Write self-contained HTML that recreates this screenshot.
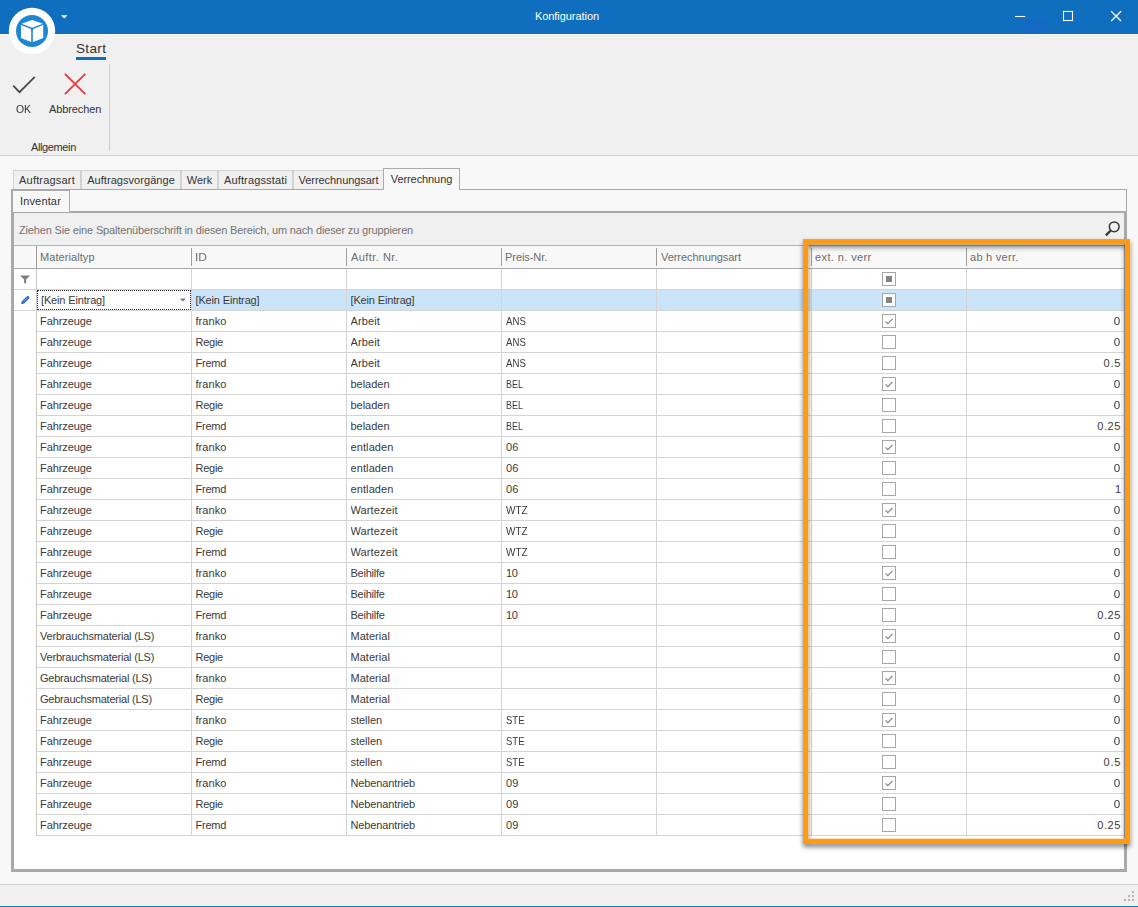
<!DOCTYPE html>
<html lang="de"><head><meta charset="utf-8"><title>Konfiguration</title>
<style>
*{box-sizing:border-box;margin:0;padding:0}
html,body{width:1138px;height:907px;overflow:hidden}
body{position:relative;background:#f8f8f8;font-family:"Liberation Sans",sans-serif;font-size:11px;color:#3a3a3a;-webkit-font-smoothing:antialiased}
.abs{position:absolute}
#title{position:absolute;left:0;top:0;width:1138px;height:34px;background:#106ebe}
#title .cap{position:absolute;left:-2px;width:1138px;top:0;line-height:33px;text-align:center;color:#fff;font-size:11px}
#ribbon{position:absolute;left:0;top:34px;width:1138px;height:122px;background:#f0f0f0;border-bottom:1px solid #d2d2d2;border-top:1px solid #fbf7f2}
#logo{position:absolute;left:0;top:0}
#start{position:absolute;left:76px;top:39px;width:30px;height:21px;padding-top:1px;border-bottom:3px solid #106ebe;font-size:13.6px;line-height:18px;letter-spacing:.3px;color:#333;white-space:nowrap}
.rsep{position:absolute;left:109px;top:64px;width:1px;height:87px;background:#cdcdcd}
.rlbl{position:absolute;white-space:nowrap;line-height:13px;color:#333}
#tabs{position:absolute;left:13px;top:170px;height:19px;display:flex}
.tab{height:19px;border:1px solid #d2d2d2;border-bottom:none;background:#f0f0f0;line-height:18px;white-space:nowrap;text-align:center;color:#333}

.tab.sel{height:22px;margin-top:-2px;margin-left:-1px;background:#f8f8f8;border:1px solid #acacac;border-bottom:none;line-height:21px;position:relative;z-index:3}
#page{position:absolute;left:11px;top:189px;width:1116px;height:683px;border:1px solid #a9a9a9}
#ipage{position:absolute;left:12px;top:211px;width:1114px;height:660px;border:1px solid #a9a9a9}
#inv{position:absolute;left:12px;top:190px;width:58px;height:22px;border:1px solid #a9a9a9;border-bottom:none;background:#f8f8f8;line-height:20px;padding-left:7px;z-index:2;color:#333;white-space:nowrap}
#grid{position:absolute;left:13px;top:212px;width:1112px;height:658px;border:1px solid #a9a9a9;background:#fff}
#gp{position:absolute;left:14px;top:213px;width:1110px;height:32px;background:#f0f0f0;line-height:34px;padding-left:5px;color:#737373;white-space:nowrap}
#hdr{position:absolute;left:14px;top:245px;width:1110px;height:24px;background:#f8f8f8;border-top:1px solid #b2b2b2;border-bottom:1px solid #a9a9a9}
.h{position:absolute;top:0;height:22px;line-height:22px;color:#6c6c6c;white-space:nowrap}
.hs{position:absolute;top:2px;width:1px;height:18px;background:#9d9d9d}
.vl{position:absolute;top:269px;width:1px;height:567px;background:#d4d4d4}
.hl{position:absolute;left:14px;width:1110px;height:1px;background:#d4d4d4}
.row{position:absolute;left:37px;width:1087px;height:21px;border-bottom:1px solid #d4d4d4;line-height:20px;white-space:nowrap}
.c{position:absolute;top:0;height:20px;overflow:hidden}
.c1{left:3px;width:150px}
.c2{left:158.5px;width:150px}
.c3{left:313.5px;width:150px}
.c4{left:469px;width:150px}
.c5{left:624px;width:150px}
.c6{left:775px;width:154px}
.c7{left:929.5px;width:154px;text-align:right;padding-right:0}
.cb{position:absolute;left:70px;top:3px;width:14px;height:14px;border:1px solid #a6a6a6;background:#fff}
.cb .ck{position:absolute;left:-1px;top:-1px}
.cb .ind{position:absolute;left:3px;top:3px;width:6px;height:6px;background:#858585}
#sel{position:absolute;left:192px;top:290px;width:932px;height:20px;background:#cce4f7}
#status{position:absolute;left:0;top:884px;width:1138px;height:23px;background:#f0f0f0;border-top:1px solid #d0d0d0;border-bottom:1px solid #106ebe;box-shadow:inset 0 -1px 0 #fbf7f1}
</style></head>
<body>
<div id="title"><div class="cap"><span style="letter-spacing:-0.05px">Konfiguration</span></div>
<svg class="abs" style="left:1000px;top:0" width="138" height="34" viewBox="0 0 138 34">
<rect x="22" y="20" width="26" height="14" fill="#1469c3"/>
<path d="M15 16.5H25.2" stroke="#fff" stroke-width="1.1" fill="none"/>
<rect x="63.5" y="11.5" width="9" height="9" stroke="#fff" stroke-width="1.1" fill="none"/>
<path d="M111.2 11.2L121 21M121 11.2L111.2 21" stroke="#fff" stroke-width="1.25" fill="none"/>
</svg>
</div>
<div id="ribbon"></div>
<svg id="logo" width="80" height="60" viewBox="0 0 80 60">
<circle cx="32" cy="31" r="23.2" fill="#fff"/>
<circle cx="32" cy="31" r="16" fill="#1e87d4"/>
<path d="M32.1 20L42.9 23.7L32.1 27.8L21.5 23.7Z" fill="#fff"/>
<path d="M21 25.1L31 29.1V42L21 38Z" fill="#fff"/>
<path d="M43.2 25.1L33.1 29.1V42L43.2 38Z" fill="#fff"/>
<path d="M31 30.5H33.1V41.6H31Z" fill="#fff" opacity=".22"/>
<path d="M61 15.2H67.4L64.2 18.6Z" fill="#fff"/>
</svg>
<div id="start">Start</div>
<svg class="abs" style="left:8px;top:70px" width="90" height="30" viewBox="8 70 90 30">
<path d="M13.2 85.7L19.5 92.2L34.8 76.8" fill="none" stroke="#474747" stroke-width="1.75"/>
<path d="M64.9 73.9L85.3 94.2M85.3 73.9L64.9 94.2" fill="none" stroke="#ea3b40" stroke-width="1.85"/>
</svg>
<div class="rlbl" style="left:16px;top:103px"><span style="display:inline-block;transform:scaleX(0.945);transform-origin:left center">OK</span></div>
<div class="rlbl" style="left:49px;top:103px"><span style="letter-spacing:-0.117px">Abbrechen</span></div>
<div class="rlbl" style="left:31px;top:141px"><span style="letter-spacing:-0.38px">Allgemein</span></div>
<div class="rsep"></div>

<div id="page"></div>
<div id="tabs">
<div class="tab first" style="width:68px"><span style="letter-spacing:0.19px">Auftragsart</span></div>
<div class="tab" style="width:100px"><span style="letter-spacing:0.05px">Auftragsvorgänge</span></div>
<div class="tab" style="width:37px"><span style="letter-spacing:-0.03px">Werk</span></div>
<div class="tab" style="width:75px"><span style="letter-spacing:0.15px">Auftragsstati</span></div>
<div class="tab" style="width:91px"><span style="letter-spacing:-0.05px">Verrechnungsart</span></div>
<div class="tab sel" style="width:77px"><span style="letter-spacing:-0.08px">Verrechnung</span></div>
</div>
<div id="ipage"></div>
<div id="inv"><span style="letter-spacing:0.15px">Inventar</span></div>
<div id="grid"></div>
<div id="gp"><span style="letter-spacing:-0.161px">Ziehen Sie eine Spaltenüberschrift in diesen Bereich, um nach dieser zu gruppieren</span></div>
<svg class="abs" style="left:1100px;top:218px" width="24" height="22" viewBox="1100 218 24 22">
<circle cx="1114.2" cy="226.8" r="4.9" fill="none" stroke="#3a3a3a" stroke-width="1.5"/>
<path d="M1110.7 230.5L1105.9 235.3" stroke="#3a3a3a" stroke-width="2.4" fill="none"/>
</svg>
<div id="hdr">
<span class="h" style="left:26px"><span style="letter-spacing:0.07px">Materialtyp</span></span>
<span class="h" style="left:181px"><span style="display:inline-block;transform:scaleX(1.09);transform-origin:left center">ID</span></span>
<span class="h" style="left:337px"><span style="letter-spacing:0.45px">Auftr. Nr.</span></span>
<span class="h" style="left:491px"><span style="letter-spacing:-0.06px">Preis-Nr.</span></span>
<span class="h" style="left:647px"><span style="letter-spacing:-0.05px">Verrechnungsart</span></span>
<span class="h" style="left:801px"><span style="letter-spacing:0.39px">ext. n. verr</span></span>
<span class="h" style="left:956px"><span style="letter-spacing:0.27px">ab h verr.</span></span>
<i class="hs" style="left:22px;top:0;height:22px"></i>
<i class="hs" style="left:177px"></i>
<i class="hs" style="left:332px"></i>
<i class="hs" style="left:487px"></i>
<i class="hs" style="left:642px"></i>
<i class="hs" style="left:797px"></i>
<i class="hs" style="left:952px"></i>
</div>
<div id="sel"></div>
<i class="hl" style="top:289px"></i>
<i class="hl" style="top:310px"></i>
<i class="vl" style="left:36px;background:#c8c8c8"></i>
<i class="vl" style="left:191px"></i>
<i class="vl" style="left:346px"></i>
<i class="vl" style="left:501px"></i>
<i class="vl" style="left:656px"></i>
<i class="vl" style="left:811px"></i>
<i class="vl" style="left:966px"></i>
<svg class="abs" style="left:18px;top:272px" width="16" height="36" viewBox="18 272 16 36">
<path d="M20 275.4H30.2L26.1 279.6V283.2H24.1V279.6Z" fill="#7f7f7f"/>
<g transform="translate(25.3 300.1) rotate(-45)"><path d="M-5.9 0L-3.3 -1.55H3.6A1.55 1.55 0 0 1 3.6 1.55H-3.3Z" fill="#2568c8"/><path d="M-2.6 -0.1H3.2" stroke="#9cc0f0" stroke-width=".7" fill="none"/></g>
</svg>
<div class="row" style="top:269px"><span class="c c6"><span class="cb"><i class="ind"></i></span></span></div>
<div class="row" style="top:290px"><span class="c c1" style="left:4px"><span style="letter-spacing:-0.146px">[Kein Eintrag]</span></span><span class="c c2"><span style="letter-spacing:-0.146px">[Kein Eintrag]</span></span><span class="c c3"><span style="letter-spacing:-0.146px">[Kein Eintrag]</span></span><span class="c c6"><span class="cb"><i class="ind"></i></span></span></div>
<div class="abs" style="left:37px;top:290px;width:154px;height:20px;border:1px dotted #2a2a2a;background:transparent"></div>
<svg class="abs" style="left:178px;top:296px" width="10" height="8" viewBox="0 0 10 8"><path d="M1.8 2.6H7.8L4.8 5.8Z" fill="#7f7f7f"/></svg>
<div class="rows">
<div class="row" style="top:311px"><span class="c c1"><span style="letter-spacing:-0.09px">Fahrzeuge</span></span><span class="c c2"><span style="letter-spacing:0.05px">franko</span></span><span class="c c3"><span style="letter-spacing:0.127px">Arbeit</span></span><span class="c c4"><span style="display:inline-block;transform:scaleX(0.876);transform-origin:left center">ANS</span></span><span class="c c5"></span><span class="c c6"><span class="cb"><svg class="ck" width="13" height="13" viewBox="0 0 13 13"><path d="M3.6 7.4 L5.85 9.6 L10.5 4.8" fill="none" stroke="#848484" stroke-width="1.2"/></svg></span></span><span class="c c7"><span style="display:inline-block;transform:scaleX(1.06);transform-origin:right center">0</span></span></div>
<div class="row" style="top:332px"><span class="c c1"><span style="letter-spacing:-0.09px">Fahrzeuge</span></span><span class="c c2"><span style="letter-spacing:-0.26px">Regie</span></span><span class="c c3"><span style="letter-spacing:0.127px">Arbeit</span></span><span class="c c4"><span style="display:inline-block;transform:scaleX(0.876);transform-origin:left center">ANS</span></span><span class="c c5"></span><span class="c c6"><span class="cb"></span></span><span class="c c7"><span style="display:inline-block;transform:scaleX(1.06);transform-origin:right center">0</span></span></div>
<div class="row" style="top:353px"><span class="c c1"><span style="letter-spacing:-0.09px">Fahrzeuge</span></span><span class="c c2"><span style="letter-spacing:-0.21px">Fremd</span></span><span class="c c3"><span style="letter-spacing:0.127px">Arbeit</span></span><span class="c c4"><span style="display:inline-block;transform:scaleX(0.876);transform-origin:left center">ANS</span></span><span class="c c5"></span><span class="c c6"><span class="cb"></span></span><span class="c c7"><span style="letter-spacing:0.85px;margin-right:-0.85px">0.5</span></span></div>
<div class="row" style="top:374px"><span class="c c1"><span style="letter-spacing:-0.09px">Fahrzeuge</span></span><span class="c c2"><span style="letter-spacing:0.05px">franko</span></span><span class="c c3"><span style="letter-spacing:-0.02px">beladen</span></span><span class="c c4"><span style="display:inline-block;transform:scaleX(0.817);transform-origin:left center">BEL</span></span><span class="c c5"></span><span class="c c6"><span class="cb"><svg class="ck" width="13" height="13" viewBox="0 0 13 13"><path d="M3.6 7.4 L5.85 9.6 L10.5 4.8" fill="none" stroke="#848484" stroke-width="1.2"/></svg></span></span><span class="c c7"><span style="display:inline-block;transform:scaleX(1.06);transform-origin:right center">0</span></span></div>
<div class="row" style="top:395px"><span class="c c1"><span style="letter-spacing:-0.09px">Fahrzeuge</span></span><span class="c c2"><span style="letter-spacing:-0.26px">Regie</span></span><span class="c c3"><span style="letter-spacing:-0.02px">beladen</span></span><span class="c c4"><span style="display:inline-block;transform:scaleX(0.817);transform-origin:left center">BEL</span></span><span class="c c5"></span><span class="c c6"><span class="cb"></span></span><span class="c c7"><span style="display:inline-block;transform:scaleX(1.06);transform-origin:right center">0</span></span></div>
<div class="row" style="top:416px"><span class="c c1"><span style="letter-spacing:-0.09px">Fahrzeuge</span></span><span class="c c2"><span style="letter-spacing:-0.21px">Fremd</span></span><span class="c c3"><span style="letter-spacing:-0.02px">beladen</span></span><span class="c c4"><span style="display:inline-block;transform:scaleX(0.817);transform-origin:left center">BEL</span></span><span class="c c5"></span><span class="c c6"><span class="cb"></span></span><span class="c c7"><span style="letter-spacing:0.63px;margin-right:-0.63px">0.25</span></span></div>
<div class="row" style="top:437px"><span class="c c1"><span style="letter-spacing:-0.09px">Fahrzeuge</span></span><span class="c c2"><span style="letter-spacing:0.05px">franko</span></span><span class="c c3"><span style="letter-spacing:0.1px">entladen</span></span><span class="c c4"><span style="letter-spacing:0.22px">06</span></span><span class="c c5"></span><span class="c c6"><span class="cb"><svg class="ck" width="13" height="13" viewBox="0 0 13 13"><path d="M3.6 7.4 L5.85 9.6 L10.5 4.8" fill="none" stroke="#848484" stroke-width="1.2"/></svg></span></span><span class="c c7"><span style="display:inline-block;transform:scaleX(1.06);transform-origin:right center">0</span></span></div>
<div class="row" style="top:458px"><span class="c c1"><span style="letter-spacing:-0.09px">Fahrzeuge</span></span><span class="c c2"><span style="letter-spacing:-0.26px">Regie</span></span><span class="c c3"><span style="letter-spacing:0.1px">entladen</span></span><span class="c c4"><span style="letter-spacing:0.22px">06</span></span><span class="c c5"></span><span class="c c6"><span class="cb"></span></span><span class="c c7"><span style="display:inline-block;transform:scaleX(1.06);transform-origin:right center">0</span></span></div>
<div class="row" style="top:479px"><span class="c c1"><span style="letter-spacing:-0.09px">Fahrzeuge</span></span><span class="c c2"><span style="letter-spacing:-0.21px">Fremd</span></span><span class="c c3"><span style="letter-spacing:0.1px">entladen</span></span><span class="c c4"><span style="letter-spacing:0.22px">06</span></span><span class="c c5"></span><span class="c c6"><span class="cb"></span></span><span class="c c7"><span style="margin-right:-0.6px">1</span></span></div>
<div class="row" style="top:500px"><span class="c c1"><span style="letter-spacing:-0.09px">Fahrzeuge</span></span><span class="c c2"><span style="letter-spacing:0.05px">franko</span></span><span class="c c3"><span style="letter-spacing:0.12px">Wartezeit</span></span><span class="c c4"><span style="display:inline-block;transform:scaleX(0.904);transform-origin:left center">WTZ</span></span><span class="c c5"></span><span class="c c6"><span class="cb"><svg class="ck" width="13" height="13" viewBox="0 0 13 13"><path d="M3.6 7.4 L5.85 9.6 L10.5 4.8" fill="none" stroke="#848484" stroke-width="1.2"/></svg></span></span><span class="c c7"><span style="display:inline-block;transform:scaleX(1.06);transform-origin:right center">0</span></span></div>
<div class="row" style="top:521px"><span class="c c1"><span style="letter-spacing:-0.09px">Fahrzeuge</span></span><span class="c c2"><span style="letter-spacing:-0.26px">Regie</span></span><span class="c c3"><span style="letter-spacing:0.12px">Wartezeit</span></span><span class="c c4"><span style="display:inline-block;transform:scaleX(0.904);transform-origin:left center">WTZ</span></span><span class="c c5"></span><span class="c c6"><span class="cb"></span></span><span class="c c7"><span style="display:inline-block;transform:scaleX(1.06);transform-origin:right center">0</span></span></div>
<div class="row" style="top:542px"><span class="c c1"><span style="letter-spacing:-0.09px">Fahrzeuge</span></span><span class="c c2"><span style="letter-spacing:-0.21px">Fremd</span></span><span class="c c3"><span style="letter-spacing:0.12px">Wartezeit</span></span><span class="c c4"><span style="display:inline-block;transform:scaleX(0.904);transform-origin:left center">WTZ</span></span><span class="c c5"></span><span class="c c6"><span class="cb"></span></span><span class="c c7"><span style="display:inline-block;transform:scaleX(1.06);transform-origin:right center">0</span></span></div>
<div class="row" style="top:563px"><span class="c c1"><span style="letter-spacing:-0.09px">Fahrzeuge</span></span><span class="c c2"><span style="letter-spacing:0.05px">franko</span></span><span class="c c3"><span style="letter-spacing:-0.25px">Beihilfe</span></span><span class="c c4"><span style="letter-spacing:-0.26px">10</span></span><span class="c c5"></span><span class="c c6"><span class="cb"><svg class="ck" width="13" height="13" viewBox="0 0 13 13"><path d="M3.6 7.4 L5.85 9.6 L10.5 4.8" fill="none" stroke="#848484" stroke-width="1.2"/></svg></span></span><span class="c c7"><span style="display:inline-block;transform:scaleX(1.06);transform-origin:right center">0</span></span></div>
<div class="row" style="top:584px"><span class="c c1"><span style="letter-spacing:-0.09px">Fahrzeuge</span></span><span class="c c2"><span style="letter-spacing:-0.26px">Regie</span></span><span class="c c3"><span style="letter-spacing:-0.25px">Beihilfe</span></span><span class="c c4"><span style="letter-spacing:-0.26px">10</span></span><span class="c c5"></span><span class="c c6"><span class="cb"></span></span><span class="c c7"><span style="display:inline-block;transform:scaleX(1.06);transform-origin:right center">0</span></span></div>
<div class="row" style="top:605px"><span class="c c1"><span style="letter-spacing:-0.09px">Fahrzeuge</span></span><span class="c c2"><span style="letter-spacing:-0.21px">Fremd</span></span><span class="c c3"><span style="letter-spacing:-0.25px">Beihilfe</span></span><span class="c c4"><span style="letter-spacing:-0.26px">10</span></span><span class="c c5"></span><span class="c c6"><span class="cb"></span></span><span class="c c7"><span style="letter-spacing:0.63px;margin-right:-0.63px">0.25</span></span></div>
<div class="row" style="top:626px"><span class="c c1"><span style="letter-spacing:-0.19px">Verbrauchsmaterial (LS)</span></span><span class="c c2"><span style="letter-spacing:0.05px">franko</span></span><span class="c c3"><span style="letter-spacing:0.03px">Material</span></span><span class="c c4"></span><span class="c c5"></span><span class="c c6"><span class="cb"><svg class="ck" width="13" height="13" viewBox="0 0 13 13"><path d="M3.6 7.4 L5.85 9.6 L10.5 4.8" fill="none" stroke="#848484" stroke-width="1.2"/></svg></span></span><span class="c c7"><span style="display:inline-block;transform:scaleX(1.06);transform-origin:right center">0</span></span></div>
<div class="row" style="top:647px"><span class="c c1"><span style="letter-spacing:-0.19px">Verbrauchsmaterial (LS)</span></span><span class="c c2"><span style="letter-spacing:-0.26px">Regie</span></span><span class="c c3"><span style="letter-spacing:0.03px">Material</span></span><span class="c c4"></span><span class="c c5"></span><span class="c c6"><span class="cb"></span></span><span class="c c7"><span style="display:inline-block;transform:scaleX(1.06);transform-origin:right center">0</span></span></div>
<div class="row" style="top:668px"><span class="c c1"><span style="letter-spacing:-0.225px">Gebrauchsmaterial (LS)</span></span><span class="c c2"><span style="letter-spacing:0.05px">franko</span></span><span class="c c3"><span style="letter-spacing:0.03px">Material</span></span><span class="c c4"></span><span class="c c5"></span><span class="c c6"><span class="cb"><svg class="ck" width="13" height="13" viewBox="0 0 13 13"><path d="M3.6 7.4 L5.85 9.6 L10.5 4.8" fill="none" stroke="#848484" stroke-width="1.2"/></svg></span></span><span class="c c7"><span style="display:inline-block;transform:scaleX(1.06);transform-origin:right center">0</span></span></div>
<div class="row" style="top:689px"><span class="c c1"><span style="letter-spacing:-0.225px">Gebrauchsmaterial (LS)</span></span><span class="c c2"><span style="letter-spacing:-0.26px">Regie</span></span><span class="c c3"><span style="letter-spacing:0.03px">Material</span></span><span class="c c4"></span><span class="c c5"></span><span class="c c6"><span class="cb"></span></span><span class="c c7"><span style="display:inline-block;transform:scaleX(1.06);transform-origin:right center">0</span></span></div>
<div class="row" style="top:710px"><span class="c c1"><span style="letter-spacing:-0.09px">Fahrzeuge</span></span><span class="c c2"><span style="letter-spacing:0.05px">franko</span></span><span class="c c3"><span style="letter-spacing:-0.02px">stellen</span></span><span class="c c4"><span style="display:inline-block;transform:scaleX(0.864);transform-origin:left center">STE</span></span><span class="c c5"></span><span class="c c6"><span class="cb"><svg class="ck" width="13" height="13" viewBox="0 0 13 13"><path d="M3.6 7.4 L5.85 9.6 L10.5 4.8" fill="none" stroke="#848484" stroke-width="1.2"/></svg></span></span><span class="c c7"><span style="display:inline-block;transform:scaleX(1.06);transform-origin:right center">0</span></span></div>
<div class="row" style="top:731px"><span class="c c1"><span style="letter-spacing:-0.09px">Fahrzeuge</span></span><span class="c c2"><span style="letter-spacing:-0.26px">Regie</span></span><span class="c c3"><span style="letter-spacing:-0.02px">stellen</span></span><span class="c c4"><span style="display:inline-block;transform:scaleX(0.864);transform-origin:left center">STE</span></span><span class="c c5"></span><span class="c c6"><span class="cb"></span></span><span class="c c7"><span style="display:inline-block;transform:scaleX(1.06);transform-origin:right center">0</span></span></div>
<div class="row" style="top:752px"><span class="c c1"><span style="letter-spacing:-0.09px">Fahrzeuge</span></span><span class="c c2"><span style="letter-spacing:-0.21px">Fremd</span></span><span class="c c3"><span style="letter-spacing:-0.02px">stellen</span></span><span class="c c4"><span style="display:inline-block;transform:scaleX(0.864);transform-origin:left center">STE</span></span><span class="c c5"></span><span class="c c6"><span class="cb"></span></span><span class="c c7"><span style="letter-spacing:0.85px;margin-right:-0.85px">0.5</span></span></div>
<div class="row" style="top:773px"><span class="c c1"><span style="letter-spacing:-0.09px">Fahrzeuge</span></span><span class="c c2"><span style="letter-spacing:0.05px">franko</span></span><span class="c c3"><span style="letter-spacing:-0.13px">Nebenantrieb</span></span><span class="c c4"><span style="letter-spacing:0.21px">09</span></span><span class="c c5"></span><span class="c c6"><span class="cb"><svg class="ck" width="13" height="13" viewBox="0 0 13 13"><path d="M3.6 7.4 L5.85 9.6 L10.5 4.8" fill="none" stroke="#848484" stroke-width="1.2"/></svg></span></span><span class="c c7"><span style="display:inline-block;transform:scaleX(1.06);transform-origin:right center">0</span></span></div>
<div class="row" style="top:794px"><span class="c c1"><span style="letter-spacing:-0.09px">Fahrzeuge</span></span><span class="c c2"><span style="letter-spacing:-0.26px">Regie</span></span><span class="c c3"><span style="letter-spacing:-0.13px">Nebenantrieb</span></span><span class="c c4"><span style="letter-spacing:0.21px">09</span></span><span class="c c5"></span><span class="c c6"><span class="cb"></span></span><span class="c c7"><span style="display:inline-block;transform:scaleX(1.06);transform-origin:right center">0</span></span></div>
<div class="row" style="top:815px"><span class="c c1"><span style="letter-spacing:-0.09px">Fahrzeuge</span></span><span class="c c2"><span style="letter-spacing:-0.21px">Fremd</span></span><span class="c c3"><span style="letter-spacing:-0.13px">Nebenantrieb</span></span><span class="c c4"><span style="letter-spacing:0.21px">09</span></span><span class="c c5"></span><span class="c c6"><span class="cb"></span></span><span class="c c7"><span style="letter-spacing:0.63px;margin-right:-0.63px">0.25</span></span></div>
</div>
<svg class="abs" style="left:790px;top:226px;overflow:visible" width="348" height="630" viewBox="790 226 348 630">
<defs><filter id="ds" x="-5%" y="-5%" width="112%" height="110%"><feGaussianBlur in="SourceAlpha" stdDeviation="2.8"/><feOffset dx="0.3" dy="2.8"/><feComponentTransfer><feFuncA type="linear" slope="0.52"/></feComponentTransfer><feMerge><feMergeNode/><feMergeNode in="SourceGraphic"/></feMerge></filter></defs>
<rect x="805.65" y="241.65" width="321.9" height="599.7" fill="none" stroke="#ff9a16" stroke-width="5.1" filter="url(#ds)"/>
</svg>
<div id="status"></div>
<svg class="abs" style="left:1120px;top:888px" width="16" height="16" viewBox="1120 888 16 16" fill="#b4b4b4" shape-rendering="crispEdges">
<rect x="1132" y="891" width="2" height="2"/>
<rect x="1128" y="895" width="2" height="2"/><rect x="1132" y="895" width="2" height="2"/>
<rect x="1124" y="899" width="2" height="2"/><rect x="1128" y="899" width="2" height="2"/><rect x="1132" y="899" width="2" height="2"/>
</svg>
</body></html>
